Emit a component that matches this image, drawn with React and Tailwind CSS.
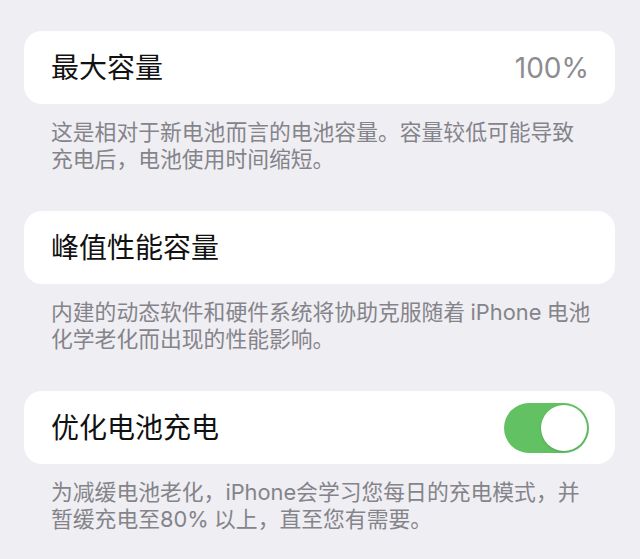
import React from "react";

const font = {
  fontFamily: '"Inter", "Noto Sans CJK SC", "Noto Sans", sans-serif',
};

function Toggle() {
  return (
    <div className="flex h-[50px] w-[85px] items-center justify-end rounded-full bg-[#62c263] p-[2px]">
      <div className="h-[46px] w-[46px] rounded-full bg-white shadow-[0_1px_3px_rgba(0,0,0,0.15)]" />
    </div>
  );
}

function Section({ title, right, lines }) {
  return (
    <div className="flex flex-col">
      <div className="flex h-[73px] items-center justify-between rounded-[18px] bg-white pl-[27px] pr-[26px]">
        <span className="text-[28px] leading-none text-[#111]">{title}</span>
        {right}
      </div>
      <div className="mt-[15px] flex flex-col px-[27px] text-[21.8px] leading-[27px] text-[#84848a]">
        {lines.map((line) => (
          <span key={line} className="whitespace-nowrap">
            {line}
          </span>
        ))}
      </div>
    </div>
  );
}

export default function App() {
  return (
    <div
      className="flex min-h-[559px] w-[640px] flex-col gap-[38px] overflow-hidden bg-[#efeef3] pl-[24px] pr-[25px] pt-[31px]"
      style={font}
    >
      <Section
        title="最大容量"
        right={<span className="text-[28px] leading-none text-[#8c8c91]">100%</span>}
        lines={["这是相对于新电池而言的电池容量。容量较低可能导致", "充电后，电池使用时间缩短。"]}
      />
      <Section
        title="峰值性能容量"
        lines={["内建的动态软件和硬件系统将协助克服随着\u2005iPhone\u2005电池", "化学老化而出现的性能影响。"]}
      />
      <Section
        title="优化电池充电"
        right={<Toggle />}
        lines={["为减缓电池老化，iPhone会学习您每日的充电模式，并", "暂缓充电至80%\u2005以上，直至您有需要。"]}
      />
    </div>
  );
}
